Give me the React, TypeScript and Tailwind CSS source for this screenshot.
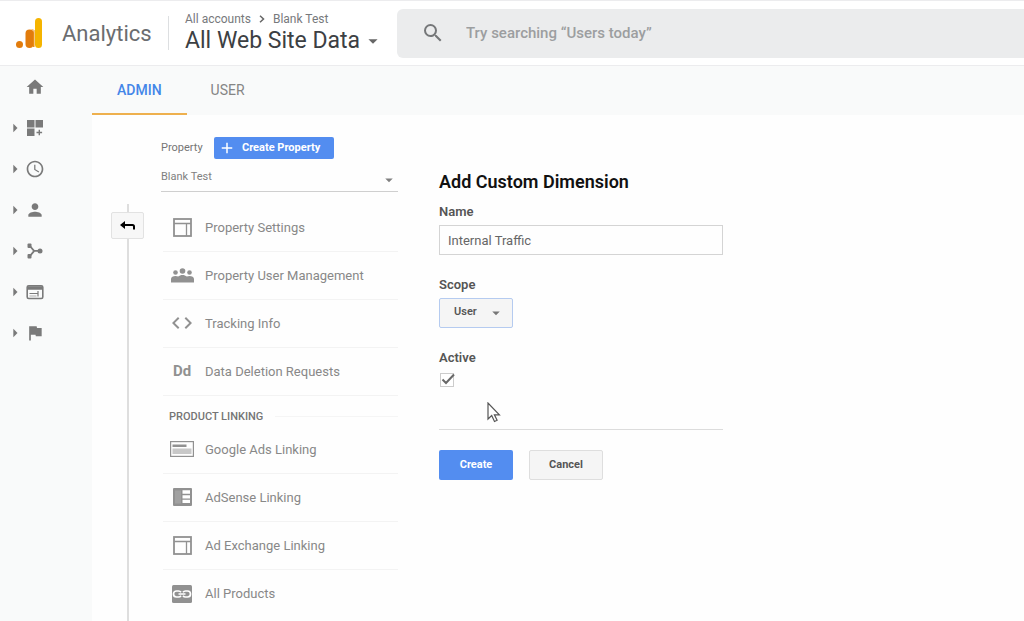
import { ReactNode, useState } from 'react'
import { clsx } from 'clsx'
import {
  MdAccessTime,
  MdAdd,
  MdArrowDropDown,
  MdArrowRight,
  MdCode,
  MdFlag,
  MdHome,
  MdPerson,
  MdSearch,
} from 'react-icons/md'

const LogoIcon = () => (
  <svg width="28" height="30" viewBox="0 0 28 30" aria-hidden="true">
    <rect x="19" y="0" width="7" height="30" rx="3.500" fill="#f5b400" />
    <rect x="9.500" y="11.500" width="8" height="18.500" rx="4" fill="#e27c0c" />
    <path d="M14 11.500a3.500 3.500 0 0 1 3.500 3.500v-3.500zM17 12h1.500v17H17z" fill="#ea8d10" />
    <circle cx="3.500" cy="26.500" r="3.500" fill="#e27c0c" />
  </svg>
)

const CustomizationIcon = () => (
  <svg width="18" height="18" viewBox="0 0 18 18" fill="currentColor">
    <rect x="1" y="1" width="7.500" height="7.500" />
    <rect x="9.500" y="1" width="7.500" height="7.500" />
    <rect x="1" y="9.500" width="7.500" height="7.500" />
    <path d="M12.600 10.700h1.400v2.100h2.100v1.400H14v2.100h-1.400v-2.100h-2.100v-1.400h2.100z" />
  </svg>
)

const AcquisitionIcon = () => (
  <svg width="18" height="18" viewBox="0 0 18 18" fill="currentColor">
    <path
      d="M3.500 3.500 8 8.800h6M3.500 14.500 8 9.200"
      fill="none"
      stroke="currentColor"
      strokeWidth="1.800"
    />
    <rect x="1.500" y="1.500" width="4" height="4.500" rx="1" />
    <rect x="1.500" y="12" width="4" height="4.500" rx="1" />
    <circle cx="14" cy="9" r="2.500" />
  </svg>
)

const BehaviorIcon = () => (
  <svg width="18" height="18" viewBox="0 0 18 18" fill="none" stroke="currentColor">
    <rect x="1.200" y="2.700" width="15.600" height="12.800" rx="1.500" strokeWidth="1.600" />
    <path d="M1 5h16" strokeWidth="3.500" />
    <path d="M3.500 10.500h8.500M12 8v5.500" strokeWidth="1.200" />
    <path d="M3.500 13h7" strokeWidth="0.600" />
  </svg>
)

const LayoutIcon = () => (
  <svg width="19" height="19" viewBox="0 0 19 19" fill="none" stroke="currentColor">
    <rect x="1" y="1" width="17" height="17" strokeWidth="1.800" />
    <path d="M1 5.500h17M13.500 5.500V18" strokeWidth="1.300" />
  </svg>
)

const UsersIcon = () => (
  <svg width="23" height="15" viewBox="0 0 23 15" fill="currentColor">
    <circle cx="4.500" cy="4.500" r="2.300" />
    <circle cx="11.500" cy="3" r="2.800" />
    <circle cx="18.500" cy="4.500" r="2.300" />
    <path d="M0 14.500V11c0-2 2-3 4.500-3 1 0 2 .2 2.700.6C8.300 7.500 9.800 7 11.500 7s3.200.5 4.300 1.600c.7-.4 1.700-.6 2.700-.6C21 8 23 9 23 11v3.500z" />
  </svg>
)

const AdsIcon = () => (
  <svg width="24" height="16" viewBox="0 0 24 16" fill="currentColor">
    <rect x=".6" y=".6" width="22.800" height="14.800" fill="none" stroke="currentColor" strokeWidth="1.200" />
    <rect x="2.500" y="3.500" width="14" height="2.500" />
    <rect x="2.500" y="7.500" width="19" height="5.500" opacity=".5" />
  </svg>
)

const AdSenseIcon = () => (
  <svg width="19" height="18" viewBox="0 0 19 18" fill="currentColor">
    <rect x="0" y="0" width="19" height="18" rx="1" />
    <path d="M9.500 2.200H17v3.600H9.500zM9.500 7.200H17v3.200H9.500zM9.500 11.800H17v3.200H9.500z" fill="white" />
    <rect x="2" y="2.500" width="6" height="13" fill="white" opacity=".15" />
  </svg>
)

const LinkIcon = () => (
  <svg width="20" height="18" viewBox="0 0 20 18" fill="none">
    <rect width="20" height="18" rx="1.500" fill="currentColor" />
    <path
      d="M9 7.200C8.500 6.500 7.500 6 6.500 6h-2a3 3 0 0 0 0 6h2c1 0 2-.5 2.500-1.200M11 7.200c.5-.7 1.500-1.200 2.500-1.200h2a3 3 0 0 1 0 6h-2c-1 0-2-.5-2.500-1.200M6.500 9h7"
      stroke="white"
      strokeWidth="1.700"
    />
  </svg>
)

const ReturnIcon = () => (
  <svg width="16" height="12" viewBox="0 0 16 12">
    <path d="M0 5 5 1v8z" fill="black" />
    <path d="M4 5h8.500q1.500 0 1.500 1.500V9.500" fill="none" stroke="black" strokeWidth="2" />
  </svg>
)

const CursorIcon = () => (
  <svg width="14" height="21" viewBox="0 0 14 21">
    <path
      d="M1 1v16l3.700-3.500L7.500 19.500l2.600-1.200-2.700-5.500h5z"
      fill="white"
      stroke="#555"
      strokeWidth="1.200"
    />
  </svg>
)

const navigation: { label: string; icon: ReactNode; expandable: boolean }[] = [
  { label: 'Home', icon: <MdHome size={20} />, expandable: false },
  { label: 'Customization', icon: <CustomizationIcon />, expandable: true },
  { label: 'Real-time', icon: <MdAccessTime size={20} />, expandable: true },
  { label: 'Audience', icon: <MdPerson size={20} />, expandable: true },
  { label: 'Acquisition', icon: <AcquisitionIcon />, expandable: true },
  { label: 'Behavior', icon: <BehaviorIcon />, expandable: true },
  { label: 'Conversions', icon: <MdFlag size={20} />, expandable: true },
]

const propertyItems = [
  { label: 'Property Settings', icon: <LayoutIcon /> },
  { label: 'Property User Management', icon: <UsersIcon /> },
  { label: 'Tracking Info', icon: <MdCode size={24} /> },
  {
    label: 'Data Deletion Requests',
    icon: <span className="text-[15px] font-bold">Dd</span>,
  },
]

const linkingItems = [
  { label: 'Google Ads Linking', icon: <AdsIcon /> },
  { label: 'AdSense Linking', icon: <AdSenseIcon /> },
  { label: 'Ad Exchange Linking', icon: <LayoutIcon /> },
  { label: 'All Products', icon: <LinkIcon /> },
]

const Header = () => (
  <header className="flex h-[66px] items-center border-t border-b border-[#ececee] bg-white">
    <a href="#" className="flex items-center gap-[18px] pl-4">
      <LogoIcon />
      <span className="w-[90px] text-[22px] text-[#6b6d70]">Analytics</span>
    </a>
    <div className="ml-4 h-[34px] w-px bg-[#dddfe1]" />
    <div className="ml-4 flex w-[212px] shrink-0 flex-col">
      <div className="flex items-center text-xs leading-4 text-[#77797c]">
        <span>All accounts</span>
        <svg className="mx-2" width="6" height="8" viewBox="0 0 6 8">
          <path d="M1 .8 4.500 4 1 7.200" fill="none" stroke="#666" strokeWidth="1.500" />
        </svg>
        <span>Blank Test</span>
      </div>
      <button className="flex items-center gap-0.5 text-left text-[23px] leading-7 whitespace-nowrap text-[#3c4043]">
        All Web Site Data
        <MdArrowDropDown size={22} className="text-[#666]" />
      </button>
    </div>
    <label className="flex h-[49px] grow items-center gap-[21px] rounded-l-md bg-[#ebeced] pl-6">
      <MdSearch size={24} className="text-[#757779]" />
      <input
        type="search"
        aria-label="Search"
        placeholder="Try searching “Users today”"
        className="grow bg-transparent text-[15px] font-medium outline-none placeholder:text-[#9c9ea0]"
      />
    </label>
  </header>
)

const Sidebar = () => (
  <nav className="flex w-[92px] shrink-0 flex-col bg-[#f9fafa]">
    {navigation.map(({ label, icon, expandable }) => (
      <a
        key={label}
        href="#"
        aria-label={label}
        className="flex h-[41px] items-center text-[#7a7a7a]"
      >
        <span className="flex w-[25px] justify-end">
          {expandable && <MdArrowRight size={20} />}
        </span>
        <span className="flex w-5 justify-center">{icon}</span>
      </a>
    ))}
  </nav>
)

const ListItem = ({
  label,
  icon,
  last,
}: {
  label: string
  icon: ReactNode
  last?: boolean
}) => (
  <li className={clsx('h-12 border-[#f3f3f3]', !last && 'border-b')}>
    <a href="#" className="flex h-full items-center gap-[11px] pl-[7px]">
      <span className="flex w-6 shrink-0 justify-center text-[#919191]">
        {icon}
      </span>
      <span className="text-[13px] text-[#888]">{label}</span>
    </a>
  </li>
)

const PropertyColumn = () => (
  <section className="w-[237px] shrink-0">
    <div className="flex items-center justify-between pr-16">
      <label htmlFor="property" className="text-[11px] text-[#757575]">
        Property
      </label>
      <button className="flex h-[22px] w-[120px] items-center gap-1.5 rounded-xs bg-[#538df0] pl-1 text-[11px] font-bold whitespace-nowrap text-white">
        <MdAdd size={18} />
        Create Property
      </button>
    </div>
    <div className="relative mt-1">
      <select
        id="property"
        className="h-7 w-full appearance-none border-b border-[#cfcfcf] text-[11px] text-[#808080] outline-none"
      >
        <option>Blank Test</option>
      </select>
      <MdArrowDropDown
        size={18}
        className="pointer-events-none absolute top-2 right-0 text-[#808080]"
      />
    </div>
    <ul className="mt-3 pl-0.5">
      {propertyItems.map((item) => (
        <ListItem key={item.label} {...item} />
      ))}
    </ul>
    <div className="flex h-[30px] items-center gap-3 pt-3 pl-2">
      <h3 className="text-[11px] font-medium whitespace-nowrap text-[#757575]">
        PRODUCT LINKING
      </h3>
      <div className="h-px grow bg-[#f5f5f5]" />
    </div>
    <ul className="pl-0.5">
      {linkingItems.map((item, i) => (
        <ListItem
          key={item.label}
          {...item}
          last={i === linkingItems.length - 1}
        />
      ))}
    </ul>
  </section>
)

const DimensionForm = () => {
  const [name, setName] = useState('Internal Traffic')
  const [active, setActive] = useState(true)

  return (
    <form
      className="relative mt-[33px] ml-[41px] w-full max-w-[284px] text-[13px] text-[#555]"
      onSubmit={(e) => e.preventDefault()}
    >
      <h1 className="text-lg leading-6 font-semibold text-[#111]">
        Add Custom Dimension
      </h1>
      <label htmlFor="name" className="mt-2 block leading-5 font-semibold">
        Name
      </label>
      <input
        id="name"
        value={name}
        onChange={(e) => setName(e.target.value)}
        className="mt-[3px] block h-[30px] w-full border border-[#d4d4d4] px-2 text-[#666] outline-none"
      />
      <label htmlFor="scope" className="mt-5 block leading-5 font-semibold">
        Scope
      </label>
      <div className="relative mt-[3px] w-[74px]">
        <select
          id="scope"
          className="h-[30px] w-full appearance-none rounded-xs border border-[#b5cbf0] bg-[#f5f5f5] pb-0.5 pl-3.5 text-[11px] font-semibold text-[#555] outline-none"
        >
          <option>User</option>
          <option>Hit</option>
          <option>Session</option>
          <option>Product</option>
        </select>
        <MdArrowDropDown
          size={18}
          className="pointer-events-none absolute top-1.5 right-2 text-[#777]"
        />
      </div>
      <label htmlFor="active" className="mt-5 block leading-5 font-semibold">
        Active
      </label>
      <div className="relative mt-[5px] h-3.5">
        <input
          id="active"
          type="checkbox"
          checked={active}
          onChange={(e) => setActive(e.target.checked)}
          className="ml-px block size-3.5 appearance-none border border-[#ccc] bg-white"
        />
        {active && (
          <svg
            className="pointer-events-none absolute top-0 left-0.5"
            width="15"
            height="13"
            viewBox="0 0 15 13"
          >
            <path d="M1.500 6.500 5 10l8-8.500" fill="none" stroke="#686868" strokeWidth="2" />
          </svg>
        )}
      </div>
      <hr className="mt-[42px] border-[#dcdcdc]" />
      <div className="mt-5 flex gap-4 text-[11px] font-bold">
        <button
          type="submit"
          className="h-[30px] w-[74px] rounded-xs bg-[#538df0] text-white"
        >
          Create
        </button>
        <button
          type="button"
          className="h-[30px] w-[74px] rounded-xs border border-[#dedede] bg-[#f5f5f5] text-[#555]"
        >
          Cancel
        </button>
      </div>
      <div className="pointer-events-none absolute top-[232px] left-12">
        <CursorIcon />
      </div>
    </form>
  )
}

export default function App() {
  return (
    <div className="flex min-h-screen flex-col bg-[#fefefe] font-['Roboto',sans-serif]">
      <Header />
      <div className="flex grow">
        <Sidebar />
        <div className="flex grow flex-col">
          <div className="flex h-[49px] bg-[#f9fafa] text-sm">
            <a
              href="#"
              className="flex items-center border-b-2 border-[#eeb04e] px-[25px] font-medium text-[#4486e8]"
            >
              ADMIN
            </a>
            <a
              href="#"
              className="flex items-center border-b-2 border-transparent px-6 text-[#858585]"
            >
              USER
            </a>
          </div>
          <main className="flex grow pt-[22px]">
            <div className="mt-[67px] mr-[17px] ml-[19px] flex w-[33px] shrink-0 flex-col items-center">
              <div className="h-2 w-0.5 bg-[#dedede]" />
              <button
                aria-label="Back"
                className="flex h-[27px] w-[33px] items-center justify-center rounded-xs border border-[#e2e2e2] bg-[#f7f7f7]"
              >
                <ReturnIcon />
              </button>
              <div className="w-0.5 grow bg-[#dedede]" />
            </div>
            <PropertyColumn />
            <DimensionForm />
          </main>
        </div>
      </div>
    </div>
  )
}
